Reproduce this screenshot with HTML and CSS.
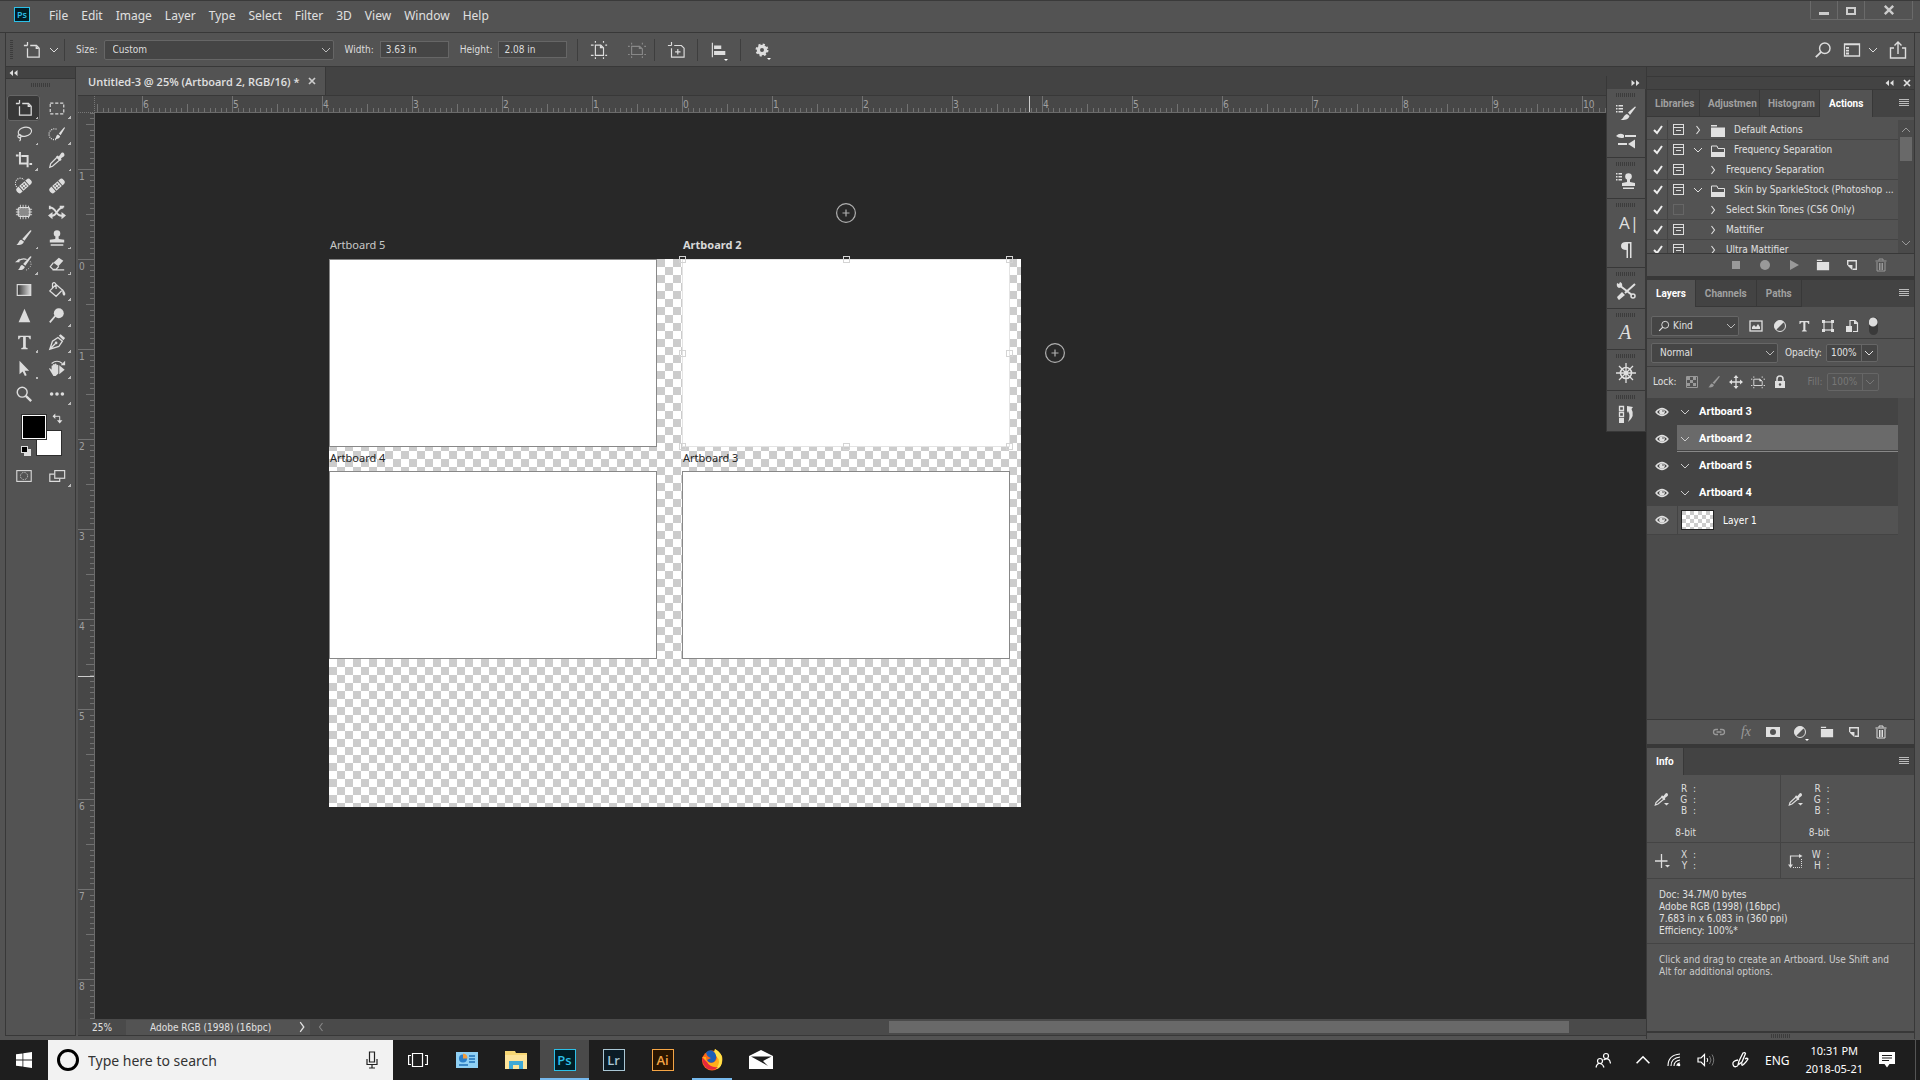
FILE: index.html
```html
<!DOCTYPE html>
<html lang="en">
<head>
    <meta charset="UTF-8">
    <meta name="viewport" content="width=device-width, initial-scale=1.0">
    <title>Untitled-3 @ 25%</title>
    <link rel="stylesheet" href="styles.css">
</head>
<body>
    <svg class="sprite" aria-hidden="true">
        <defs>
            <linearGradient id="grad"><stop offset="0" stop-color="#333"/><stop offset="1" stop-color="#ddd"/></linearGradient>
        </defs>
        <symbol id="artboard" viewBox="0 0 20 20"><path d="M5 1v4M1 5h4M5 8v10h13V8l-3-3H8" fill="none" stroke="currentColor" stroke-width="1.4"/><path d="M14 5v4h4z"/></symbol>
        <symbol id="marquee" viewBox="0 0 20 20"><rect x="2.500" y="4.500" width="15" height="12" fill="none" stroke="currentColor" stroke-width="1.3" stroke-dasharray="3.500 2"/></symbol>
        <symbol id="lasso" viewBox="0 0 20 20"><g fill="none" stroke="currentColor" stroke-width="1.3"><ellipse cx="11" cy="7.500" rx="7.500" ry="5" transform="rotate(-12 11 7.500)"/><circle cx="5" cy="12.500" r="1.800"/><path d="M5 14c2 1 1 3 0 4"/></g></symbol>
        <symbol id="quicksel" viewBox="0 0 20 20"><path d="M9 16a6 6 0 1 1 1-11" fill="none" stroke="currentColor" stroke-width="1.400" stroke-dasharray="1.200 1.200"/><path d="M19 3l-1-.500-6 7 2 2zM11 10.500l2.500 2c-1 3-3 3-6 3 2-1 1-4 3.500-5z"/></symbol>
        <symbol id="crop" viewBox="0 0 20 20"><path d="M1 5h3M5.500 1v13H14M7 5.500h7V18M16 14.500h3" fill="none" stroke="currentColor" stroke-width="2.200"/></symbol>
        <symbol id="dropper" viewBox="0 0 20 20"><path d="M10 7L3 14l-1 4 3-1 8-7z" fill="none" stroke="currentColor" stroke-width="1.400"/><path d="M9 6l2-1 1 1 3-4q2-1 3 1t-.500 3l-3 2 .500 2-2 1z"/></symbol>
        <symbol id="sampler" viewBox="0 0 16 14"><path d="M8 5L2 10.500 1.300 13 4 12l6-5z" fill="none" stroke="currentColor" stroke-width="1.200"/><path d="M7 4l1.500-.500.800.800L11.500 1.500q1.500-1 2.300.500t-.500 2.300L11 6l.300 1.500-1.500.800zM10 11h5l-2.500 2.500z"/></symbol>
        <symbol id="bandaid" viewBox="0 0 20 20"><g transform="rotate(-42 10 10)"><rect x="0" y="6.500" width="20" height="7" rx="3"/><g fill="#505050"><rect x="5" y="6" width="1" height="8"/><rect x="14" y="6" width="1" height="8"/><circle cx="8.500" cy="8.600" r=".9"/><circle cx="11.500" cy="8.600" r=".9"/><circle cx="8.500" cy="11.400" r=".9"/><circle cx="11.500" cy="11.400" r=".9"/></g></g></symbol>
        <symbol id="spot" viewBox="0 0 20 20"><path d="M2 11a5 5 0 1 1 8-8" fill="none" stroke="currentColor" stroke-width="1.300" stroke-dasharray="1.200 1.200"/><use href="#bandaid"/></symbol>
        <symbol id="patch" viewBox="0 0 20 20"><rect x="3.500" y="5" width="13" height="10" rx="2" fill="#8a8a8a" stroke="currentColor" stroke-width="1.300"/><path d="M6 2v4M9 2v4M12 2v4M15 3v3M6 14v4M9 14v4M12 14v4M15 14v3M1 7h4M1 10h4M1 13h4M15 7h4M15 10h4M15 13h4" stroke="currentColor"/></symbol>
        <symbol id="shuffle" viewBox="0 0 20 20"><path d="M2 5q4 0 7 5t8 4M17 5q-4 0-7 5t-7 4M2 3v4M13 4h5" fill="none" stroke="currentColor" stroke-width="2"/><path d="M0 14l5-4v8zM20 14l-5-4v8z"/></symbol>
        <symbol id="brush" viewBox="0 0 20 20"><path d="M18.500 2L17 1.500 8 11l2.500 2zM7 12l3 2.300C8.500 18 5 18 1.500 17.500 4.500 16.500 4 12.500 7 12z"/></symbol>
        <symbol id="stamp" viewBox="0 0 20 20"><circle cx="10" cy="5" r="3.600"/><path d="M8.500 7h3l.500 4 6 1v3H2v-3l6-1zM3 17h14v1.500H3z"/></symbol>
        <symbol id="history" viewBox="0 0 20 20"><path d="M18.500 2L17 1.500 9 10l2.500 2zM8 11l3 2.300C9.500 17 6 17 3 16.500c3-1 2-5 5-5.500zM0 8l5-4v4z"/><path d="M4 6q5-3 9-1" fill="none" stroke="currentColor" stroke-width="1.400"/><path d="M17 7q3 6-5 10" fill="none" stroke="currentColor" stroke-dasharray="1.200 1.600"/></symbol>
        <symbol id="eraser" viewBox="0 0 20 20"><path d="M12 3l5 3.500-5.500 6-5.500-4z"/><path d="M6 8.500L2.500 13l3 3H9l3-3.500M5 16.500h13" fill="none" stroke="currentColor" stroke-width="1.400"/></symbol>
        <symbol id="gradient" viewBox="0 0 20 20"><rect x="2.500" y="4" width="15" height="12" fill="url(#grad)" stroke="currentColor" stroke-width="1.300"/></symbol>
        <symbol id="bucket" viewBox="0 0 20 20"><path d="M9 4l7 6-7 7-7-6zM5 8V3q2-3 4 1v5" fill="none" stroke="currentColor" stroke-width="1.400"/><path d="M16 9c3 3 4 6 2.500 7s-3-1-2.500-7z"/></symbol>
        <symbol id="sharpen" viewBox="0 0 20 20"><path d="M10.500 2L17 17H4z"/></symbol>
        <symbol id="dodge" viewBox="0 0 20 20"><circle cx="12" cy="7" r="5.500"/><path d="M8 10l-6 7" stroke="currentColor" stroke-width="2"/></symbol>
        <symbol id="type" viewBox="0 0 20 20"><path d="M3.500 3h14v4h-1.200q-.300-2.400-2.300-2.500h-2v11q0 1 2 1.200V18H7v-1.300q2-.200 2-1.200v-11H7Q5 4.600 4.700 7H3.500z"/></symbol>
        <symbol id="pen" viewBox="0 0 20 20"><path d="M2 18l3-9 6-4 5 4-4 6zM2 18l6-6" fill="none" stroke="currentColor" stroke-width="1.500"/><circle cx="9" cy="11" r="1.500"/><path d="M12 3l2-1.500 5 4-2 2.500z"/></symbol>
        <symbol id="arrow" viewBox="0 0 20 20"><path d="M5 2v15l3.500-3 2.500 5 2-1-2.300-5h5z"/></symbol>
        <symbol id="hand" viewBox="0 0 20 20"><path d="M1 10.500q1.500-1 3 1.500V7.500q1-1 1.500 0V11V6q1-1 2 0v5V5.500q1-1 2 0V11V7q1-1 2 0v9l-3 3H6z"/><path d="M12.500 7l6 5-6 5z"/><path d="M4 5q6-5 12 0" fill="none" stroke="currentColor" stroke-width="1.300"/><path d="M14 7h5V2z"/></symbol>
        <symbol id="zoom" viewBox="0 0 20 20"><circle cx="8" cy="8" r="5.500" fill="none" stroke="currentColor" stroke-width="1.600"/><path d="M12 12l6 6" stroke="currentColor" stroke-width="2.600"/></symbol>
        <symbol id="dots" viewBox="0 0 20 20"><circle cx="4" cy="10" r="2"/><circle cx="10" cy="10" r="2"/><circle cx="16" cy="10" r="2"/></symbol>
        <symbol id="swap" viewBox="0 0 20 20"><path d="M5 6h9v9" fill="none" stroke="currentColor" stroke-width="1.800"/><path d="M6 1v10L1 6zM9 13h10l-5 6z"/></symbol>
        <symbol id="mask" viewBox="0 0 20 20"><rect x="2" y="4" width="16" height="12" fill="none" stroke="currentColor" stroke-width="1.200"/><circle cx="10" cy="10" r="4" fill="none" stroke="currentColor" stroke-dasharray="1 1"/></symbol>
        <symbol id="screens" viewBox="0 0 20 20"><path d="M7 8H2v8h11v-3" fill="none" stroke="currentColor" stroke-width="1.300"/><rect x="7.500" y="4" width="11" height="8.500" fill="none" stroke="currentColor" stroke-width="1.300"/></symbol>
        <symbol id="chev" viewBox="0 0 10 10"><path d="M1 3l4 4 4-4" fill="none" stroke="currentColor"/></symbol>
        <symbol id="chevr" viewBox="0 0 10 10"><path d="M3.500 1L6.500 5l-3 4" fill="none" stroke="currentColor" stroke-width="1.100"/></symbol>
        <symbol id="dbl" viewBox="0 0 10 8"><path d="M5 1v6L1.500 4zM9.500 1v6L6 4z"/></symbol>
        <symbol id="x" viewBox="0 0 10 10"><path d="M2 2l6 6M8 2L2 8" stroke="currentColor" stroke-width="1.700"/></symbol>
        <symbol id="menu" viewBox="0 0 10 10"><path d="M0 1.500h10M0 3.500h10M0 5.500h10M0 7.500h10" stroke="currentColor"/></symbol>
        <symbol id="abport" viewBox="0 0 20 20"><path d="M6 4.500h6l3 3V16H6zM6 0v2M15 0v2M6 18v2M15 18v2M1 4.500h3M17 4.500h2M1 16h3M17 16h2" fill="none" stroke="currentColor" stroke-width="1.300"/><path d="M11 4v4h4z"/></symbol>
        <symbol id="abland" viewBox="0 0 20 20"><path d="M4 6h9l3 3v6H4zM4 2v2M16 2v2M4 17v2M16 17v2M0 6h2M18 6h2M0 15h2M18 15h2" fill="none" stroke="currentColor" stroke-width="1.300"/><path d="M12 5v4h4z"/></symbol>
        <symbol id="abadd" viewBox="0 0 20 20"><path d="M5 1v4M1 5h4M5 8v10h14V8l-3-3H8M12 9v6M9 12h6" fill="none" stroke="currentColor" stroke-width="1.300"/></symbol>
        <symbol id="align" viewBox="0 0 20 20"><path d="M2 2h1.300v16H2zM4.500 5h8v4h-8zM4.500 11H17v4.500H4.500z"/></symbol>
        <symbol id="gear" viewBox="0 0 20 20"><circle cx="10" cy="10" r="4.500" fill="none" stroke="currentColor" stroke-width="4"/><circle cx="10" cy="10" r="6.800" fill="none" stroke="currentColor" stroke-width="2.600" stroke-dasharray="2.670 2.670"/></symbol>
        <symbol id="search" viewBox="0 0 20 20"><circle cx="12" cy="8" r="5.800" fill="none" stroke="currentColor" stroke-width="1.600"/><path d="M8 12l-6 6" stroke="currentColor" stroke-width="2"/></symbol>
        <symbol id="workspace" viewBox="0 0 20 20"><path d="M2.500 4h15v12h-15zM2 4.500h16" fill="none" stroke="currentColor" stroke-width="1.300"/><path d="M4 7h3v1.800H4zM4 9.800h3v1.800H4zM4 12.600h3v1.800H4z"/></symbol>
        <symbol id="share" viewBox="0 0 20 20"><path d="M6 8H2.500v10h15V8H14M10 14V2M6.500 5.500L10 2l3.500 3.500" fill="none" stroke="currentColor" stroke-width="1.400"/></symbol>
        <symbol id="min" viewBox="0 0 12 12"><path d="M1 8h10v3H1z"/></symbol>
        <symbol id="max" viewBox="0 0 12 12"><path d="M2 4h8v6H2z" fill="none" stroke="currentColor" stroke-width="2"/></symbol>
        <symbol id="brushes" viewBox="0 0 20 20"><path d="M0 3h1.500v1.500H0zM2.500 3H7v1.500H2.500zM0 6h1.500v1.500H0zM2.500 6H7v1.500H2.500zM0 9h1.500v1.500H0zM2.500 9H7v1.500H2.500zM20 5l-1-.500-7 6 2 2.500zM11 12l2.500 2c-1 4-5 4-9 4 3-1 3-5 6.500-6z"/></symbol>
        <symbol id="presets" viewBox="0 0 20 20"><path d="M0 6q4-4 8-1v2.500Q4 9 0 6zM9 5h11v2H9zM2 13h9v2H2zM12 14l7-4.500v9z"/></symbol>
        <symbol id="clones" viewBox="0 0 20 20"><path d="M0 2h1.500v1.500H0zM2.500 2H6v1.500H2.500zM0 5h1.500v1.500H0zM2.500 5H6v1.500H2.500zM0 8h1.500v1.500H0zM2.500 8H6v1.500H2.500zM6 12l5-1v-3h3v3l5 1v3H6zM7 16.500h11V18H7z"/><circle cx="12.500" cy="5.500" r="3.300"/></symbol>
        <symbol id="para" viewBox="0 0 20 20"><path d="M15.500 2v16h-1.500V3.500h-2V18h-1.500v-8Q5 10 5 6T10 2z"/></symbol>
        <symbol id="wrench" viewBox="0 0 20 20"><path d="M3 4l13 10M9 12l10-9" stroke="currentColor" stroke-width="2"/><path d="M2 18l1 1 6-5-3-3-5 5zM1 2l2 1 1-2q3 1 2 5l-3 1Q0 6 1 2z"/><circle cx="17" cy="15" r="2" fill="none" stroke="currentColor" stroke-width="1.500"/></symbol>
        <symbol id="wheel" viewBox="0 0 20 20"><circle cx="10" cy="10" r="5.500" fill="none" stroke="currentColor" stroke-width="1.600"/><path d="M10 0v20M0 10h20M3 3l14 14M17 3L3 17" stroke="currentColor" stroke-width="1.300"/><circle cx="10" cy="10" r="2"/></symbol>
        <symbol id="histpanel" viewBox="0 0 20 20"><path d="M3.500 2.500h4v4h-4zM3.500 8.500h4v4h-4z" fill="none" stroke="currentColor" stroke-width="1.300"/><path d="M3 14h5v5H3zM11 2l6 1-1.500 2q4 7-3.500 13 3-6 0-11l-1 2z"/></symbol>
        <symbol id="folder" viewBox="0 0 16 14"><path d="M1 1h6v1.500H1zM1 3.500h14V13H1z"/></symbol>
        <symbol id="folderopen" viewBox="0 0 16 14"><path d="M1.500 8V2H7l1 2.500h6.500V8" fill="none" stroke="currentColor"/><path d="M1 8h14v5H1z"/></symbol>
        <symbol id="new" viewBox="0 0 14 14"><path d="M2 7V2h10v10H8" fill="none" stroke="currentColor" stroke-width="1.600"/><path d="M2 7h5.500v6L2 8z"/></symbol>
        <symbol id="trash" viewBox="0 0 14 14"><path d="M1.500 3h11M5 2.500V1h4v1.500M3 4v9h8V4M5.500 5v7M7 5v7M8.500 5v7" fill="none" stroke="currentColor"/></symbol>
        <symbol id="image" viewBox="0 0 14 14"><rect x="1" y="2" width="12" height="10" fill="none" stroke="currentColor" stroke-width="1.300"/><path d="M3 10V8l2-2 2 2 2-3 2 3v2z"/></symbol>
        <symbol id="adjust" viewBox="0 0 14 14"><circle cx="7" cy="7" r="5.500" fill="none" stroke="currentColor"/><path d="M11 3a5.500 5.500 0 1 0-8 8z"/></symbol>
        <symbol id="shape" viewBox="0 0 14 14"><rect x="3" y="3" width="8" height="8" fill="none" stroke="currentColor" stroke-width="1.200"/><path d="M1 1h3v3H1zM10 1h3v3h-3zM1 10h3v3H1zM10 10h3v3h-3z"/></symbol>
        <symbol id="smart" viewBox="0 0 14 14"><path d="M5 7V1.500h5L12.500 4v8.500H8" fill="none" stroke="currentColor" stroke-width="1.200"/><path d="M1 7h6v6H1zM9 1v4h4z"/></symbol>
        <symbol id="checker" viewBox="0 0 14 14"><path d="M1.500 1.500h11v11h-11z" fill="none" stroke="currentColor"/><path d="M2 2h3v3H2zM8 2h3v3H8zM5 5h3v3H5zM2 8h3v3H2zM8 8h3v3H8z"/></symbol>
        <symbol id="move" viewBox="0 0 14 14"><path d="M7 1v12M1 7h12" stroke="currentColor" stroke-width="1.300"/><path d="M7 0l2.500 3h-5zM7 14l2.500-3h-5zM0 7l3-2.500v5zM14 7l-3-2.500v5z"/></symbol>
        <symbol id="lock" viewBox="0 0 14 14"><path d="M4 6V4a3 3 0 0 1 6 0v2" fill="none" stroke="currentColor" stroke-width="1.500"/><path d="M2 6h10v7H2z"/><circle cx="7" cy="9.500" r="1.200" fill="#535353"/></symbol>
        <symbol id="eye" viewBox="0 0 14 10"><path d="M1 5q6-7 12 0-6 7-12 0z" fill="none" stroke="currentColor" stroke-width="1.300"/><circle cx="7" cy="5" r="2.800"/><circle cx="8" cy="4" r=".8" fill="#444"/></symbol>
        <symbol id="link" viewBox="0 0 14 14"><path d="M6 9.500H4a2.500 2.500 0 0 1 0-5h2M8 4.500h2a2.500 2.500 0 0 1 0 5H8M4.500 7h5" fill="none" stroke="currentColor" stroke-width="1.300"/></symbol>
        <symbol id="addmask" viewBox="0 0 14 12"><path d="M0 1h14v10H0z"/><circle cx="7" cy="6" r="3" fill="#535353"/></symbol>
        <symbol id="rec" viewBox="0 0 12 12"><circle cx="6" cy="6" r="5"/></symbol>
        <symbol id="stop" viewBox="0 0 12 12"><path d="M2 2h8v8H2z"/></symbol>
        <symbol id="play" viewBox="0 0 12 12"><path d="M2 1l9 5-9 5z"/></symbol>
        <symbol id="cross" viewBox="0 0 16 14"><path d="M7.500 0v14M1 7h12.500" stroke="currentColor" stroke-width="1.300"/><path d="M11 11h5l-2.500 2.500z"/></symbol>
        <symbol id="rectsize" viewBox="0 0 16 14"><path d="M2.500 12V2H12" fill="none" stroke="currentColor" stroke-width="1.200"/><path d="M0 10.500h5L2.500 14zM11 0v4l3.500-2z"/><path d="M13.500 5v8.500H5" fill="none" stroke="currentColor" stroke-dasharray="1 1"/></symbol>
        <symbol id="plus" viewBox="0 0 20 20"><circle cx="10" cy="10" r="9.400" fill="none" stroke="currentColor" stroke-width="1.200"/><path d="M10 6.500v7M6.500 10h7" stroke="currentColor" stroke-width="1.200"/></symbol>
        <symbol id="win" viewBox="0 0 16 16"><path d="M0 2.300l6.500-.900v6.200H0zM7.300 1.300L16 0v7.600H7.300zM0 8.400h6.500v6.200L0 13.700zM7.300 8.400H16V16l-8.700-1.200z"/></symbol>
        <symbol id="mic" viewBox="0 0 14 18"><path d="M4.500 1h5v10h-5zM2 8v5.500h10V8M7 13.500V17M4 17h6" fill="none" stroke="currentColor" stroke-width="1.200"/></symbol>
        <symbol id="taskview" viewBox="0 0 20 16"><path d="M4.500 1.500h10v13h-10zM3 3.500H.600v9H3M17 3.500h2.400v9H17" fill="none" stroke="currentColor" stroke-width="1.200"/></symbol>
        <symbol id="people" viewBox="0 0 16 16"><g fill="none" stroke="currentColor" stroke-width="1.200"><circle cx="11" cy="4" r="2.500"/><path d="M8.500 8q6-3.500 7 3.500"/><circle cx="5" cy="9" r="2.500"/><path d="M1 15.500q1-4.500 4-4t4 4"/></g></symbol>
        <symbol id="wifi" viewBox="0 0 14 14"><path d="M1 13Q1 2 13 1M4 13Q4 5 13 4M7 13Q7 8 13 7M10 13q0-3 3-3" fill="none" stroke="currentColor" stroke-width="1.100"/><circle cx="12" cy="12" r="1.300"/></symbol>
        <symbol id="sound" viewBox="0 0 18 14"><path d="M1 5h3l3.500-3.500v11L4 9H1z" fill="none" stroke="currentColor" stroke-width="1.200"/><path d="M10 5q1.500 2 0 4" fill="none" stroke="currentColor"/><path d="M12.500 3q3 4 0 8M15 1.500q3.500 5.500 0 11" fill="none" stroke="#777"/></symbol>
        <symbol id="ink" viewBox="0 0 18 18"><g fill="none" stroke="currentColor" stroke-width="1.300"><path d="M7 14l1-4 4-8q2-1 2.500.500L11 11z"/><path d="M7 9q-6 1-5 4.500t4.500 1.500M11 12q-1 4 2 1t4-5q-1-1.500-3 0"/></g></symbol>
        <symbol id="notif" viewBox="0 0 16 16"><path d="M0 0h16v12h-5.500L8 15.500 5.500 12H0z"/><path d="M3 3.500h10M3 6h10M3 8.500h7" stroke="#1b1b1b"/></symbol>
        <symbol id="mail" viewBox="0 0 24 20"><path d="M12 0l12 6v13H0V6z"/><path d="M2 6.500h20.500L14 11l5 5-7-4z" fill="#1e1e1e"/></symbol>
        <symbol id="explorer" viewBox="0 0 22 18"><path d="M0 0h10l1 2h11v16H0z" fill="#f7d774"/><path d="M0 4h22v14H0z" fill="#fde49a"/><path d="M4 18v-8h14v8h-4v-4H8v4z" fill="#3fa9d6"/></symbol>
        <symbol id="control" viewBox="0 0 22 16"><path d="M0 0h22v16H0z" fill="#8fd0f4"/><circle cx="7" cy="6.500" r="4" fill="#2b7fc9"/><path d="M7 6.500v-5a5 5 0 0 1 4.500 5z" fill="#f39c3d"/><path d="M13 4h6M13 7h6M13 10h6M3 13h9" stroke="#1f6fb5" stroke-width="1.500"/></symbol>
        <symbol id="firefox" viewBox="0 0 22 22"><circle cx="11" cy="11.500" r="10" fill="#ff6a1a"/><path d="M1 8q5 10 14 12 8-3 6-13-2-4-7-7-1 3 2 6 1 6-5 8-6 0-6-6z" fill="#ffae19"/><path d="M14 0q8 4 7 12t-6 8q6-8 0-13-3-3-1-7z" fill="#ffe24a"/><path d="M5 3.500Q10-1 14 4q3 5-1 9-5 2-7-2l4-2q-4-1-5-5.500z" fill="#1c5fb8"/><path d="M1 8q0 8 6 12 7 2 10-2-8 1-11-5z" fill="#e6283c"/></symbol>
    </svg>

    <header class="menubar">
        <span class="logo logo-ps">Ps</span>
        <nav class="menus">
            <button>File</button><button>Edit</button><button>Image</button><button>Layer</button><button>Type</button><button>Select</button><button>Filter</button><button>3D</button><button>View</button><button>Window</button><button>Help</button>
        </nav>
        <div class="window-buttons">
            <button aria-label="Minimize"><svg class="i12"><use href="#min"/></svg></button>
            <button aria-label="Restore"><svg class="i12"><use href="#max"/></svg></button>
            <button class="close" aria-label="Close"><svg class="i14"><use href="#x"/></svg></button>
        </div>
    </header>

    <div class="options">
        <span class="grip-v"></span>
        <button class="tool-preset" aria-label="Artboard tool"><svg class="i18"><use href="#artboard"/></svg><svg class="i10"><use href="#chev"/></svg></button>
        <span class="sep"></span>
        <label for="size">Size:</label>
        <select id="size" class="size-select"><option>Custom</option></select>
        <label for="width">Width:</label>
        <input id="width" type="text" value="3.63 in">
        <label for="height">Height:</label>
        <input id="height" type="text" value="2.08 in">
        <span class="sep"></span>
        <button class="opt-btn" aria-label="Portrait"><svg class="i18"><use href="#abport"/></svg></button>
        <button class="opt-btn dim" aria-label="Landscape"><svg class="i18"><use href="#abland"/></svg></button>
        <span class="sep"></span>
        <button class="opt-btn" aria-label="Add artboard"><svg class="i18"><use href="#abadd"/></svg></button>
        <span class="sep"></span>
        <button class="opt-btn menu-dot" aria-label="Align"><svg class="i18"><use href="#align"/></svg></button>
        <span class="sep"></span>
        <button class="opt-btn menu-dot" aria-label="Settings"><svg class="i16"><use href="#gear"/></svg></button>
        <div class="options-right">
            <button aria-label="Search"><svg class="i18"><use href="#search"/></svg></button>
            <button aria-label="Workspace"><svg class="i20"><use href="#workspace"/></svg><svg class="i10"><use href="#chev"/></svg></button>
            <button aria-label="Share"><svg class="i20"><use href="#share"/></svg></button>
        </div>
    </div>

    <main class="workspace">
        <aside class="toolbar">
            <div class="toolbar-head"><svg class="i10"><use href="#dbl"/></svg></div>
            <span class="grip"></span>
            <div class="tools">
                <button class="tool active" aria-label="Artboard"><svg><use href="#artboard"/></svg></button>
                <button class="tool" aria-label="Marquee"><svg><use href="#marquee"/></svg></button>
                <button class="tool" aria-label="Lasso"><svg><use href="#lasso"/></svg></button>
                <button class="tool" aria-label="Quick selection"><svg><use href="#quicksel"/></svg></button>
                <button class="tool" aria-label="Crop"><svg><use href="#crop"/></svg></button>
                <button class="tool" aria-label="Eyedropper"><svg><use href="#dropper"/></svg></button>
                <button class="tool single" aria-label="Spot healing"><svg><use href="#spot"/></svg></button>
                <button class="tool single" aria-label="Healing brush"><svg><use href="#bandaid"/></svg></button>
                <button class="tool single" aria-label="Patch"><svg><use href="#patch"/></svg></button>
                <button class="tool single" aria-label="Content-aware move"><svg><use href="#shuffle"/></svg></button>
                <button class="tool" aria-label="Brush"><svg><use href="#brush"/></svg></button>
                <button class="tool" aria-label="Clone stamp"><svg><use href="#stamp"/></svg></button>
                <button class="tool" aria-label="History brush"><svg><use href="#history"/></svg></button>
                <button class="tool" aria-label="Eraser"><svg><use href="#eraser"/></svg></button>
                <button class="tool single" aria-label="Gradient"><svg><use href="#gradient"/></svg></button>
                <button class="tool" aria-label="Paint bucket"><svg><use href="#bucket"/></svg></button>
                <button class="tool single" aria-label="Sharpen"><svg><use href="#sharpen"/></svg></button>
                <button class="tool" aria-label="Dodge"><svg><use href="#dodge"/></svg></button>
                <button class="tool" aria-label="Type"><svg><use href="#type"/></svg></button>
                <button class="tool" aria-label="Pen"><svg><use href="#pen"/></svg></button>
                <button class="tool" aria-label="Path selection"><svg><use href="#arrow"/></svg></button>
                <button class="tool" aria-label="Rotate view"><svg><use href="#hand"/></svg></button>
                <button class="tool single" aria-label="Zoom"><svg><use href="#zoom"/></svg></button>
                <button class="tool" aria-label="Edit toolbar"><svg><use href="#dots"/></svg></button>
            </div>
            <div class="swatches">
                <button class="swatch back" aria-label="Background colour"></button>
                <button class="swatch front" aria-label="Foreground colour"></button>
                <svg class="swap"><use href="#swap"/></svg>
                <span class="mini back"></span>
                <span class="mini front"></span>
            </div>
            <div class="tools">
                <button class="tool single" aria-label="Quick mask"><svg><use href="#mask"/></svg></button>
                <button class="tool" aria-label="Screen mode"><svg><use href="#screens"/></svg></button>
            </div>
        </aside>

        <section class="document">
            <div class="doc-tabs">
                <div class="doc-tab">Untitled-3 @ 25% (Artboard 2, RGB/16) * <button aria-label="Close tab"><svg class="i10"><use href="#x"/></svg></button></div>
            </div>
            <div class="doc-body">
                <div class="ruler-corner"></div>
                <div class="ruler-h">
                    <span>6</span><span>5</span><span>4</span><span>3</span><span>2</span><span>1</span><span>0</span><span>1</span><span>2</span><span>3</span><span>4</span><span>5</span><span>6</span><span>7</span><span>8</span><span>9</span><span>10</span>
                    <i class="mark"></i>
                </div>
                <div class="ruler-v">
                    <span>1</span><span>0</span><span>1</span><span>2</span><span>3</span><span>4</span><span>5</span><span>6</span><span>7</span><span>8</span>
                    <i class="mark"></i>
                </div>
                <div class="canvas">
                    <div class="sheet"></div>
                    <div class="artboard a5"><span>Artboard 5</span></div>
                    <div class="artboard a4 low"><span>Artboard 4</span></div>
                    <div class="artboard a3 low"><span>Artboard 3</span></div>
                    <div class="artboard a2 selected">
                        <span>Artboard 2</span>
                        <i class="handle nw"></i><i class="handle n"></i><i class="handle ne"></i><i class="handle w"></i>
                        <i class="handle e"></i><i class="handle sw"></i><i class="handle s"></i><i class="handle se"></i>
                    </div>
                    <button class="add add-top" aria-label="Add artboard above"><svg class="i20"><use href="#plus"/></svg></button>
                    <button class="add add-right" aria-label="Add artboard right"><svg class="i20"><use href="#plus"/></svg></button>
                </div>
            </div>
            <footer class="status">
                <span class="zoom-level">25%</span>
                <button class="profile"><span>Adobe RGB (1998) (16bpc)</span><svg class="i12"><use href="#chevr"/></svg></button>
                <svg class="i10 flip"><use href="#chevr"/></svg>
                <div class="hscroll"><div class="hthumb"></div></div>
            </footer>

            <aside class="strip">
                <div class="strip-head"><svg class="i10 flip"><use href="#dbl"/></svg></div>
                <div class="strip-group"><span class="grip"></span><button aria-label="Brush settings"><svg class="i20"><use href="#brushes"/></svg></button><button aria-label="Brush presets"><svg class="i20"><use href="#presets"/></svg></button></div>
                <div class="strip-group"><span class="grip"></span><button aria-label="Clone source"><svg class="i20"><use href="#clones"/></svg></button></div>
                <div class="strip-group"><span class="grip"></span><button class="char">A|</button><button aria-label="Paragraph"><svg class="i20"><use href="#para"/></svg></button></div>
                <div class="strip-group"><span class="grip"></span><button aria-label="Tool presets"><svg class="i20"><use href="#wrench"/></svg></button></div>
                <div class="strip-group"><span class="grip"></span><button class="glyph">A</button></div>
                <div class="strip-group"><span class="grip"></span><button aria-label="Navigator"><svg class="i20"><use href="#wheel"/></svg></button></div>
                <div class="strip-group"><span class="grip"></span><button aria-label="History"><svg class="i20"><use href="#histpanel"/></svg></button></div>
            </aside>
        </section>

        <aside class="dock">
            <div class="dock-head"><svg class="i10"><use href="#dbl"/></svg><svg class="i10"><use href="#x"/></svg></div>

            <section class="panel">
                <div class="tabs">
                    <button class="tab narrow">Libraries</button><button class="tab fixed">Adjustmen</button><button class="tab fixed">Histogram</button><button class="tab on">Actions</button>
                    <svg class="i10 panel-menu"><use href="#menu"/></svg>
                </div>
                <div class="actions">
                    <ul class="action-list">
                        <li><input type="checkbox" aria-label="Default Actions" checked><i class="dialog"></i><svg class="i10"><use href="#chevr"/></svg><svg class="fold"><use href="#folder"/></svg><span>Default Actions</span></li>
                        <li class="open"><input type="checkbox" aria-label="Frequency Separation set" checked><i class="dialog"></i><svg class="i10"><use href="#chev"/></svg><svg class="fold"><use href="#folderopen"/></svg><span>Frequency Separation</span></li>
                        <li class="child"><input type="checkbox" aria-label="Frequency Separation" checked><i class="dialog"></i><svg class="i10"><use href="#chevr"/></svg><span>Frequency Separation</span></li>
                        <li class="open"><input type="checkbox" aria-label="Skin by SparkleStock" checked><i class="dialog"></i><svg class="i10"><use href="#chev"/></svg><svg class="fold"><use href="#folderopen"/></svg><span>Skin by SparkleStock (Photoshop ...</span></li>
                        <li class="child"><input type="checkbox" aria-label="Select Skin Tones" checked><i class="dialog off"></i><svg class="i10"><use href="#chevr"/></svg><span>Select Skin Tones (CS6 Only)</span></li>
                        <li class="child"><input type="checkbox" aria-label="Mattifier" checked><i class="dialog"></i><svg class="i10"><use href="#chevr"/></svg><span>Mattifier</span></li>
                        <li class="child"><input type="checkbox" aria-label="Ultra Mattifier" checked><i class="dialog"></i><svg class="i10"><use href="#chevr"/></svg><span>Ultra Mattifier</span></li>
                    </ul>
                    <div class="vscroll"><svg class="i10 up"><use href="#chev"/></svg><div class="vthumb"></div><svg class="i10 down"><use href="#chev"/></svg></div>
                </div>
                <div class="panel-buttons actions-bar">
                    <button class="dim" aria-label="Stop"><svg class="i12"><use href="#stop"/></svg></button>
                    <button class="dim" aria-label="Record"><svg class="i12"><use href="#rec"/></svg></button>
                    <button class="dim" aria-label="Play"><svg class="i12"><use href="#play"/></svg></button>
                    <button aria-label="New set"><svg class="i14"><use href="#folder"/></svg></button>
                    <button aria-label="New action"><svg class="i12"><use href="#new"/></svg></button>
                    <button class="dim" aria-label="Delete"><svg class="i14"><use href="#trash"/></svg></button>
                </div>
            </section>

            <section class="panel layers-panel">
                <div class="tabs">
                    <button class="tab on">Layers</button><button class="tab">Channels</button><button class="tab">Paths</button>
                    <svg class="i10 panel-menu"><use href="#menu"/></svg>
                </div>
                <div class="row filter-row">
                    <div class="kind"><svg class="i12"><use href="#search"/></svg><select aria-label="Filter kind"><option>Kind</option></select></div>
                    <button aria-label="Pixel layers"><svg class="i14"><use href="#image"/></svg></button>
                    <button aria-label="Adjustment layers"><svg class="i14"><use href="#adjust"/></svg></button>
                    <button aria-label="Type layers"><svg class="i14"><use href="#type"/></svg></button>
                    <button aria-label="Shape layers"><svg class="i14"><use href="#shape"/></svg></button>
                    <button aria-label="Smart objects"><svg class="i14"><use href="#smart"/></svg></button>
                    <i class="switch"></i>
                </div>
                <div class="row">
                    <select class="blend" aria-label="Blend mode"><option>Normal</option></select>
                    <label for="opacity">Opacity:</label>
                    <div class="percent"><input id="opacity" type="text" value="100%"><button aria-label="Opacity slider"><svg class="i10"><use href="#chev"/></svg></button></div>
                </div>
                <div class="row lock-row">
                    <span>Lock:</span>
                    <button class="dim" aria-label="Lock transparency"><svg class="i14"><use href="#checker"/></svg></button>
                    <button class="dim" aria-label="Lock pixels"><svg class="i14"><use href="#brush"/></svg></button>
                    <button aria-label="Lock position"><svg class="i14"><use href="#move"/></svg></button>
                    <button aria-label="Lock artboard"><svg class="i14"><use href="#abland"/></svg></button>
                    <button aria-label="Lock all"><svg class="i14"><use href="#lock"/></svg></button>
                    <label class="fill-label" for="fill">Fill:</label>
                    <div class="percent off"><input id="fill" type="text" value="100%" disabled><button disabled aria-label="Fill slider"><svg class="i10"><use href="#chev"/></svg></button></div>
                </div>
                <ul class="layers">
                    <li><button aria-label="Visibility"><svg class="eye"><use href="#eye"/></svg></button><div class="name"><svg class="i10"><use href="#chev"/></svg><b>Artboard 3</b></div></li>
                    <li class="sel"><button aria-label="Visibility"><svg class="eye"><use href="#eye"/></svg></button><div class="name"><svg class="i10"><use href="#chev"/></svg><b>Artboard 2</b></div></li>
                    <li><button aria-label="Visibility"><svg class="eye"><use href="#eye"/></svg></button><div class="name"><svg class="i10"><use href="#chev"/></svg><b>Artboard 5</b></div></li>
                    <li><button aria-label="Visibility"><svg class="eye"><use href="#eye"/></svg></button><div class="name"><svg class="i10"><use href="#chev"/></svg><b>Artboard 4</b></div></li>
                    <li class="layer"><button aria-label="Visibility"><svg class="eye"><use href="#eye"/></svg></button><div class="name"><i class="thumb"></i><span>Layer 1</span></div></li>
                </ul>
                <div class="panel-buttons">
                    <button class="dim" aria-label="Link"><svg class="i14"><use href="#link"/></svg></button>
                    <button class="dim fx">fx</button>
                    <button aria-label="Add mask"><svg class="i14"><use href="#addmask"/></svg></button>
                    <button class="menu-dot" aria-label="New adjustment"><svg class="i14"><use href="#adjust"/></svg></button>
                    <button aria-label="New group"><svg class="i14"><use href="#folder"/></svg></button>
                    <button aria-label="New layer"><svg class="i12"><use href="#new"/></svg></button>
                    <button aria-label="Delete layer"><svg class="i14"><use href="#trash"/></svg></button>
                </div>
            </section>

            <section class="panel info-panel">
                <div class="tabs">
                    <button class="tab on">Info</button>
                    <svg class="i10 panel-menu"><use href="#menu"/></svg>
                </div>
                <div class="readouts">
                    <div class="readout"><svg><use href="#sampler"/></svg><dl><dt>R  :</dt><dt>G  :</dt><dt>B  :</dt></dl><p>8-bit</p></div>
                    <div class="readout"><svg><use href="#sampler"/></svg><dl><dt>R  :</dt><dt>G  :</dt><dt>B  :</dt></dl><p>8-bit</p></div>
                    <div class="readout short"><svg><use href="#cross"/></svg><dl><dt>X  :</dt><dt>Y  :</dt></dl></div>
                    <div class="readout short"><svg><use href="#rectsize"/></svg><dl><dt>W  :</dt><dt>H  :</dt></dl></div>
                </div>
                <p class="doc-info">Doc: 34.7M/0 bytes<br>Adobe RGB (1998) (16bpc)<br>7.683 in x 6.083 in (360 ppi)<br>Efficiency: 100%*</p>
                <p class="hint">Click and drag to create an Artboard. Use Shift and Alt for additional options.</p>
            </section>
            <div class="dock-foot"><span class="grip"></span></div>
        </aside>
    </main>

    <footer class="taskbar">
        <button class="start" aria-label="Start"><svg class="i16"><use href="#win"/></svg></button>
        <div class="search-box"><i class="cortana"></i><input type="text" aria-label="Search" placeholder="Type here to search"><svg class="mic"><use href="#mic"/></svg></div>
        <button class="app" aria-label="Task view"><svg class="taskview"><use href="#taskview"/></svg></button>
        <button class="app" aria-label="Control Panel"><svg class="i22"><use href="#control"/></svg></button>
        <button class="app" aria-label="File Explorer"><svg class="i22"><use href="#explorer"/></svg></button>
        <button class="app current"><span class="logo logo-ps big">Ps</span></button>
        <button class="app"><span class="logo logo-lr big">Lr</span></button>
        <button class="app"><span class="logo logo-ai big">Ai</span></button>
        <button class="app running" aria-label="Firefox"><svg class="i22"><use href="#firefox"/></svg></button>
        <button class="app" aria-label="Mail"><svg class="mail"><use href="#mail"/></svg></button>
        <div class="tray">
            <svg class="i16 people"><use href="#people"/></svg>
            <svg class="i16 up"><use href="#chev"/></svg>
            <svg class="i14"><use href="#wifi"/></svg>
            <svg class="i18"><use href="#sound"/></svg>
            <svg class="i18"><use href="#ink"/></svg>
            <span>ENG</span>
            <time>10:31 PM<br>2018-05-21</time>
            <svg class="i16 notif"><use href="#notif"/></svg>
        </div>
    </footer>
</body>
</html>
```
FILE: styles.css
```css
* {
    margin: 0;
    padding: 0;
    box-sizing: border-box;
}

html, body {
    height: 100%;
}

body {
    display: flex;
    flex-direction: column;
    background: #535353;
    color: #e0e0e0;
    font-family: "DejaVu Sans Condensed", "Noto Sans", sans-serif;
    font-size: 10px;
    overflow: hidden;
}

.sprite {
    position: absolute;
    width: 0;
    height: 0;
}

svg {
    display: block;
    fill: currentColor;
    flex: none;
}

button, input, select {
    font: inherit;
    color: inherit;
    background: none;
    border: none;
    border-radius: 0;
    outline: none;
}

ul {
    list-style: none;
}

select {
    appearance: none;
    background: #454545 url("data:image/svg+xml,%3Csvg xmlns='http://www.w3.org/2000/svg' width='10' height='10'%3E%3Cpath d='M1 3l4 4 4-4' fill='none' stroke='%23bbb'/%3E%3C/svg%3E") no-repeat right 2px center;
    border: 1px solid #666;
    border-radius: 2px;
}

.i10 { width: 10px; height: 10px; }
.i12 { width: 12px; height: 12px; }
.i14 { width: 14px; height: 14px; }
.i16 { width: 16px; height: 16px; }
.i18 { width: 18px; height: 18px; }
.i20 { width: 20px; height: 20px; }
.i22 { width: 22px; height: 22px; }

.dim { color: #999; }
.flip { transform: scaleX(-1); }
.up { transform: scaleY(-1); }

.menu-dot {
    position: relative;
}

.menu-dot::after {
    content: "";
    position: absolute;
    left: 50%;
    bottom: -2px;
    margin-left: 5px;
    border: 2px solid transparent;
    border-top-color: #fff;
    border-bottom: none;
}

.grip {
    display: block;
    width: 20px;
    height: 4px;
    background: repeating-linear-gradient(90deg, #3c3c3c 0 1px, transparent 1px 2px);
}

.grip-v {
    width: 3px;
    height: 20px;
    background: repeating-linear-gradient(#3c3c3c 0 1px, transparent 1px 2px);
}

.logo {
    display: flex;
    align-items: center;
    justify-content: center;
    width: 16px;
    height: 15px;
    border: 1px solid;
    font-family: "Open Sans", sans-serif;
    font-weight: 600;
    font-size: 9px;
    line-height: 1;
}

.logo.big {
    width: 22px;
    height: 22px;
    font-size: 13px;
}

.logo-ps { color: #2cc0e8; background: #001d26; }
.logo-lr { color: #a9c6d4; background: #0b1c26; }
.logo-ai { color: #f5a545; background: #2a1500; }

/* menu bar */
.menubar {
    display: flex;
    align-items: flex-start;
    height: 33px;
    padding: 0 7px 0 14px;
    border-top: 1px solid #3a3a3a;
    border-bottom: 1px solid #383838;
}

.menubar > .logo {
    margin-top: 6px;
}

.menus {
    display: flex;
    flex: 1;
    gap: 13px;
    padding: 6px 0 0 19px;
    font-family: "Noto Sans", sans-serif;
    font-size: 12px;
    line-height: 18px;
}

.window-buttons {
    display: flex;
    height: 19px;
    border: 1px solid #6a6a6a;
    border-top: none;
    border-radius: 0 0 2px 2px;
    color: #ccc;
}

.window-buttons button {
    display: flex;
    align-items: center;
    justify-content: center;
    width: 27px;
    border-right: 1px solid #6a6a6a;
}

.window-buttons .close {
    width: 47px;
    border-right: none;
}

/* options bar */
.options {
    display: flex;
    align-items: center;
    height: 34px;
    margin: 0 5px;
    padding-left: 4px;
    border-left: 1px solid #383838;
    border-right: 1px solid #383838;
    border-bottom: 1px solid #383838;
    color: #ddd;
}

.tool-preset {
    display: flex;
    align-items: center;
    gap: 8px;
    margin: 0 5px 0 10px;
}

.options .sep {
    width: 1px;
    height: 22px;
    background: #3e3e3e;
}

.options label {
    margin: 0 6px 0 11px;
}

.options input {
    width: 69px;
    height: 17px;
    padding: 0 5px;
    background: #454545;
    border: 1px solid #666;
}

.options input + .sep {
    margin-left: 10px;
}

.size-select {
    width: 230px;
    height: 20px;
    padding-left: 8px;
}

.opt-btn {
    display: flex;
    align-items: center;
    justify-content: center;
    width: 42px;
}

.opt-btn.dim {
    width: 34px;
    color: #888;
}

.options-right {
    display: flex;
    gap: 10px;
    margin-left: auto;
    padding-right: 6px;
}

.options-right button {
    display: flex;
    align-items: center;
    gap: 6px;
}

/* workspace */
.workspace {
    display: flex;
    flex: 1;
    min-height: 0;
    margin: 0 5px 1px;
}

.toolbar {
    width: 71px;
    margin-bottom: 3px;
    border: 1px solid #383838;
    border-top: none;
}

.toolbar-head {
    height: 12px;
    padding: 1px 2px;
    background: #434343;
    border-bottom: 1px solid #383838;
}

.toolbar > .grip {
    margin: 4px 0 0 25px;
}

.tools {
    display: grid;
    grid-template-columns: 33px 33px;
    grid-auto-rows: 26px;
    padding: 8px 0 0 1px;
}

.tool {
    display: flex;
    align-items: center;
    justify-content: center;
    color: #ddd;
    background: linear-gradient(135deg, transparent 50%, #bbb 50%) no-repeat 28px 21px / 3px 3px;
}

.tool svg {
    width: 18px;
    height: 18px;
}

.tool.single {
    background: none;
}

.tool.active {
    background-color: #383838;
    box-shadow: inset 0 0 0 1px #666;
    border-radius: 3px;
}

.swatches {
    position: relative;
    height: 48px;
}

.swatch {
    position: absolute;
    width: 26px;
    height: 26px;
    border: 1px solid #2e2e2e;
}

.swatch.front {
    left: 15px;
    top: 7px;
    background: #000;
    box-shadow: inset 0 0 0 1px #fff;
}

.swatch.back {
    left: 30px;
    top: 23px;
    background: #fff;
}

.swap {
    position: absolute;
    left: 46px;
    top: 6px;
    width: 11px;
    height: 11px;
}

.mini {
    position: absolute;
    width: 7px;
    height: 7px;
    border: 1px solid #ddd;
}

.mini.front {
    left: 15px;
    top: 39px;
    background: #000;
}

.mini.back {
    left: 18px;
    top: 42px;
    background: #ddd;
}

/* document window */
.document {
    position: relative;
    display: flex;
    flex: 1;
    flex-direction: column;
    min-width: 0;
    margin-left: 2px;
    background: #434343;
}

.doc-tabs {
    display: flex;
    height: 29px;
    border-bottom: 1px solid #383838;
}

.doc-tab {
    display: flex;
    align-items: center;
    gap: 8px;
    padding: 0 8px 0 10px;
    background: #535353;
    border-right: 1px solid #383838;
    font-family: "Open Sans", sans-serif;
    font-size: 11px;
    font-weight: 600;
}

.doc-tab button {
    color: #ccc;
}

.doc-body {
    display: grid;
    grid-template-columns: 17px 1fr;
    grid-template-rows: 17px 1fr;
    flex: 1;
    min-height: 0;
}

.ruler-corner {
    border-right: 1px dotted #777;
    border-bottom: 1px dotted #777;
    background: #474747;
}

.ruler-h,
.ruler-v {
    position: relative;
    display: flex;
    overflow: hidden;
    background-color: #474747;
    color: #a0a0a0;
}

.ruler-h {
    padding-left: 47px;
    border-bottom: 1px solid #6a6a6a;
    background-image: url("data:image/svg+xml,%3Csvg xmlns='http://www.w3.org/2000/svg' width='90' height='16' fill='%23717171'%3E%3Cpath d='M0 0h1v16H0zM6 12h1v4H6zM11 12h1v4h-1zM17 12h1v4h-1zM23 12h1v4h-1zM28 12h1v4h-1zM34 12h1v4h-1zM39 12h1v4h-1zM45 8h1v8h-1zM51 12h1v4h-1zM56 12h1v4h-1zM62 12h1v4h-1zM68 12h1v4h-1zM73 12h1v4h-1zM79 12h1v4h-1zM84 12h1v4h-1z'/%3E%3C/svg%3E");
    background-position: 47px 0;
}

.ruler-h span {
    flex: none;
    width: 90px;
    padding-left: 1px;
    line-height: 17px;
}

.ruler-v {
    flex-direction: column;
    padding-top: 56px;
    border-right: 1px solid #6a6a6a;
    background-image: url("data:image/svg+xml,%3Csvg xmlns='http://www.w3.org/2000/svg' width='16' height='90' fill='%23717171'%3E%3Cpath d='M0 0h16v1H0zM12 6h4v1h-4zM12 11h4v1h-4zM12 17h4v1h-4zM12 23h4v1h-4zM12 28h4v1h-4zM12 34h4v1h-4zM12 39h4v1h-4zM8 45h8v1H8zM12 51h4v1h-4zM12 56h4v1h-4zM12 62h4v1h-4zM12 68h4v1h-4zM12 73h4v1h-4zM12 79h4v1h-4zM12 84h4v1h-4z'/%3E%3C/svg%3E");
    background-position: 0 56px;
}

.ruler-v span {
    flex: none;
    height: 90px;
    padding-left: 1px;
    line-height: 15px;
}

.mark {
    position: absolute;
    background: #ccc;
}

.ruler-h .mark {
    left: 934px;
    width: 1px;
    height: 16px;
}

.ruler-v .mark {
    top: 563px;
    width: 16px;
    height: 1px;
}

/* artboards lie freely on the canvas */
.canvas {
    position: relative;
    overflow: hidden;
    background: #282828;
    font-family: "Noto Sans", sans-serif;
    font-size: 11px;
}

.sheet {
    position: absolute;
    left: 234px;
    top: 146px;
    width: 692px;
    height: 548px;
    background: repeating-conic-gradient(#fff 0 25%, #ccc 0 50%) 8px 0 / 16px 16px;
}

.artboard {
    position: absolute;
    width: 328px;
    height: 188px;
    background: #fff;
    border: 1px solid #888;
}

.artboard > span {
    position: absolute;
    left: 0;
    top: -23px;
    line-height: 16px;
    color: #c8c8c8;
    white-space: nowrap;
}

.artboard.low > span {
    top: -22px;
    color: #222;
}

.a5 { left: 234px; top: 146px; }
.a2 { left: 587px; top: 146px; }
.a4 { left: 234px; top: 358px; }
.a3 { left: 587px; top: 358px; }

.artboard.selected {
    border-color: #e4e4e4;
}

.artboard.selected > span {
    font-weight: 700;
    color: #d8d8d8;
}

.handle {
    position: absolute;
    width: 7px;
    height: 7px;
    border: 1px solid #d4d4d4;
}

.handle.nw, .handle.n, .handle.ne { top: -4px; }
.handle.w, .handle.e { top: 90px; }
.handle.sw, .handle.s, .handle.se { bottom: -4px; }
.handle.nw, .handle.w, .handle.sw { left: -4px; }
.handle.n, .handle.s { left: 160px; }
.handle.ne, .handle.e, .handle.se { right: -4px; }

.add {
    position: absolute;
    color: #b0b0b0;
}

.add-top { left: 741px; top: 90px; }
.add-right { left: 950px; top: 230px; }

.status {
    display: flex;
    align-items: center;
    height: 20px;
    padding-bottom: 1px;
    background: #4a4a4a;
    border-bottom: 3px solid #535353;
    box-shadow: inset 0 -1px #383838;
}

.zoom-level {
    width: 48px;
    padding-left: 14px;
}

.profile {
    display: flex;
    align-items: center;
    justify-content: space-between;
    width: 184px;
    height: 15px;
    padding: 0 2px 0 24px;
    background: #535353;
}

.status > .flip {
    margin: 0 6px;
    color: #888;
}

.hscroll {
    display: flex;
    flex: 1;
    justify-content: flex-end;
    padding-right: 77px;
}

.hthumb {
    width: 55%;
    height: 12px;
    background: #696969;
}

/* collapsed panels float over the canvas */
.strip {
    position: absolute;
    right: 0;
    top: 9px;
    width: 40px;
    background: #383838;
    border-left: 1px solid #383838;
}

.strip-head {
    display: flex;
    align-items: center;
    height: 13px;
    padding-left: 24px;
    background: #434343;
}

.strip-group {
    display: flex;
    flex-direction: column;
    margin: 0 1px 1px 0;
    padding: 4px 0 3px 9px;
    background: #535353;
}

.strip-group button {
    display: flex;
    align-items: center;
    height: 28px;
}

.strip-group .grip {
    margin-bottom: 1px;
}

.strip-group .char {
    padding-left: 3px;
    font-family: "Open Sans", sans-serif;
    font-size: 17px;
}

.strip-group .glyph {
    padding-left: 3px;
    font-family: "Liberation Serif", serif;
    font-size: 20px;
    font-style: italic;
}

/* dock */
.dock {
    display: flex;
    flex-direction: column;
    width: 269px;
    padding-top: 9px;
    background: #383838;
    border-left: 1px solid #383838;
    border-right: 1px solid #383838;
    box-shadow: inset 0 9px #434343;
}

.dock-head {
    display: flex;
    align-items: center;
    justify-content: flex-end;
    gap: 8px;
    height: 13px;
    padding-right: 2px;
    background: #434343;
    border-top: 1px solid #383838;
}

.panel {
    display: flex;
    flex-direction: column;
    margin-bottom: 2px;
    background: #535353;
    border-bottom: 1px solid #383838;
}

.tabs {
    display: flex;
    height: 28px;
    background: #434343;
    border-top: 1px solid #383838;
    font-family: Roboto, sans-serif;
}

.tab {
    padding: 0 9px;
    color: #a0a0a0;
    font-weight: 700;
    border-right: 1px solid #383838;
    border-bottom: 1px solid #383838;
}

.tab.fixed,
.tab.narrow {
    width: 60px;
    padding: 0 0 0 8px;
    text-align: left;
}

.tab.narrow {
    width: 53px;
}

.tab.on {
    background: #535353;
    color: #fff;
    border-bottom: none;
}

.tabs .panel-menu {
    margin: 8px 5px 0 auto;
    color: #bbb;
}

.actions {
    display: flex;
    height: 137px;
    padding-top: 3px;
    border-bottom: 1px solid #383838;
}

.action-list {
    flex: 1;
    overflow: hidden;
    background: linear-gradient(#444, #444) no-repeat 20px 0 / 1px 100%;
}

.action-list li {
    display: flex;
    align-items: center;
    height: 20px;
    padding-left: 6px;
    border-bottom: 1px solid #444;
    white-space: nowrap;
}

.action-list li.open {
    border-bottom-color: transparent;
}

.action-list input {
    appearance: none;
    width: 10px;
    height: 10px;
    background: url("data:image/svg+xml,%3Csvg xmlns='http://www.w3.org/2000/svg' width='10' height='10'%3E%3Cpath d='M1 5l3 3 5-7' fill='none' stroke='%23eee' stroke-width='2'/%3E%3C/svg%3E");
}

.dialog {
    width: 11px;
    height: 11px;
    margin: 0 9px 0 10px;
    border: 1px solid #ddd;
    background: linear-gradient(#ddd, #ddd) no-repeat 0 2px / 9px 1px, linear-gradient(#ddd, #ddd) no-repeat 2px 5px / 5px 1px;
}

.dialog.off {
    border-color: #666;
    background: none;
}

.action-list .fold {
    width: 16px;
    height: 14px;
    margin: 2px 8px 0 7px;
}

.action-list .child .i10 {
    margin: 0 8px 0 15px;
}

.vscroll {
    width: 16px;
    padding: 5px 2px;
    background: #4a4a4a;
    color: #999;
}

.vscroll svg {
    margin-left: 1px;
}

.vthumb {
    height: 24px;
    margin: 2px 0 77px;
    background: #696969;
}

.panel-buttons {
    display: flex;
    align-items: center;
    justify-content: flex-end;
    gap: 13px;
    height: 24px;
    padding-right: 26px;
}

.panel-buttons button {
    display: flex;
    align-items: center;
    justify-content: center;
    width: 14px;
}

.actions-bar {
    height: 22px;
    gap: 15px;
}

.fx {
    font-family: "Liberation Serif", serif;
    font-style: italic;
    font-size: 14px;
}

.layers-panel {
    flex: 1;
    min-height: 0;
}

.row {
    display: flex;
    align-items: center;
    height: 28px;
    padding: 0 4px;
    border-bottom: 1px solid #3e3e3e;
}

.row button {
    display: flex;
}

.filter-row {
    height: 32px;
    gap: 10px;
    padding-top: 6px;
}

.kind {
    display: flex;
    align-items: center;
    width: 88px;
    padding-left: 6px;
    background: #454545;
    border: 1px solid #666;
    border-radius: 2px;
}

.kind select {
    flex: 1;
    height: 18px;
    padding-left: 3px;
    border: none;
}

.switch {
    width: 9px;
    height: 18px;
    background: radial-gradient(circle at 4px 5px, #ddd 4px, #3a3a3a 5px);
    border-radius: 5px;
}

.blend {
    width: 127px;
    height: 20px;
    margin-right: 7px;
    padding-left: 8px;
}

.percent {
    display: flex;
    width: 52px;
    height: 18px;
    margin-left: 4px;
    background: #454545;
    border: 1px solid #666;
    border-radius: 2px;
}

.percent input {
    width: 35px;
    padding-left: 4px;
    border-right: 1px solid #666;
}

.percent button {
    align-items: center;
    padding-left: 2px;
}

.percent.off {
    background: none;
}

.percent.off,
.percent.off *,
.fill-label {
    color: #777;
}

.lock-row {
    height: 31px;
    gap: 8px;
    padding-left: 6px;
    padding-bottom: 2px;
    border-bottom: none;
}

.fill-label {
    margin-left: 13px;
}

.lock-row .percent {
    margin-left: -4px;
}

.layers {
    flex: 1;
    padding-right: 16px;
    background: #4b4b4b;
    border-bottom: 1px solid #383838;
}

.layers li {
    display: flex;
    height: 27px;
    background: #444;
}

.layers li > button {
    display: flex;
    align-items: center;
    width: 30px;
    padding-left: 8px;
}

.eye {
    width: 14px;
    height: 10px;
}

.name {
    display: flex;
    align-items: center;
    flex: 1;
    gap: 9px;
    padding-left: 3px;
    font-family: Roboto, sans-serif;
    font-size: 11px;
    color: #fff;
}

.name svg {
    color: #ccc;
}

.sel .name {
    background: #6a6a6a;
    box-shadow: inset 0 -1px #888, inset 0 -2px #444;
}

.layers .layer {
    height: 29px;
    background: #535353;
    border-bottom: 1px solid #444;
}

.layer .name {
    border-left: 1px solid #444;
    font-family: inherit;
    font-size: 10px;
}

.thumb {
    width: 33px;
    height: 20px;
    border: 1px solid #222;
    background: repeating-conic-gradient(#fff 0 25%, #ccc 0 50%) 0 0 / 8px 8px;
}

.info-panel {
    margin-bottom: 0;
}

.readouts {
    display: grid;
    grid-template-columns: 1fr 1fr;
    grid-template-rows: 68px 36px;
    color: #ddd;
}

.readout {
    display: grid;
    grid-template-columns: 16px 22px;
    grid-template-rows: 35px 1fr;
    align-content: start;
    gap: 0 4px;
    padding: 8px 7px 0;
    border-bottom: 1px solid #444;
}

.readout:nth-child(odd) {
    border-right: 1px solid #444;
}

.readout svg {
    width: 16px;
    height: 14px;
    margin-top: 9px;
}

.readout dt {
    line-height: 11px;
    text-align: right;
    white-space: pre;
}

.readout p {
    grid-column: 1 / -1;
    text-align: right;
    padding-top: 9px;
}

.readout.short {
    padding-top: 6px;
}

.short svg {
    margin-top: 5px;
}

.doc-info,
.hint {
    padding: 10px 20px 10px 12px;
    line-height: 12px;
}

.doc-info {
    height: 65px;
    border-bottom: 1px solid #444;
}

.hint {
    height: 87px;
    color: #ccc;
}

.dock-foot {
    display: flex;
    justify-content: center;
    height: 7px;
    padding-top: 1px;
    background: #535353;
    border-top: 1px solid #383838;
}

/* taskbar */
.taskbar {
    display: flex;
    height: 40px;
    background: #1e1e1e;
    color: #fff;
    font-family: "Noto Sans", sans-serif;
}

.start {
    display: flex;
    align-items: center;
    justify-content: center;
    width: 48px;
}

.search-box {
    display: flex;
    align-items: center;
    width: 345px;
    padding: 0 14px 0 9px;
    background: #f2f2f2;
    color: #222;
}

.cortana {
    width: 22px;
    height: 22px;
    border: 3px solid #000;
    border-radius: 50%;
}

.search-box input {
    flex: 1;
    min-width: 0;
    padding-left: 9px;
    font-size: 14px;
}

.search-box input::placeholder {
    color: #333;
}

.mic {
    width: 14px;
    height: 18px;
}

.app {
    display: flex;
    align-items: center;
    justify-content: center;
    width: 49px;
}

.app.current {
    background: #4a4a4a;
    box-shadow: inset 0 -2px #76b9ed;
}

.app.running {
    background: linear-gradient(#76b9ed, #76b9ed) no-repeat center bottom / 40px 2px;
}

.taskview {
    width: 20px;
    height: 16px;
}

.mail {
    width: 24px;
    height: 20px;
}

.tray {
    display: flex;
    align-items: center;
    gap: 16px;
    margin-left: auto;
    margin-right: 4px;
    padding-right: 20px;
    border-right: 1px solid #555;
    font-size: 12px;
}

.tray .people {
    margin-right: 8px;
}

.tray time {
    font-size: 11px;
    line-height: 18px;
    text-align: center;
}
```
